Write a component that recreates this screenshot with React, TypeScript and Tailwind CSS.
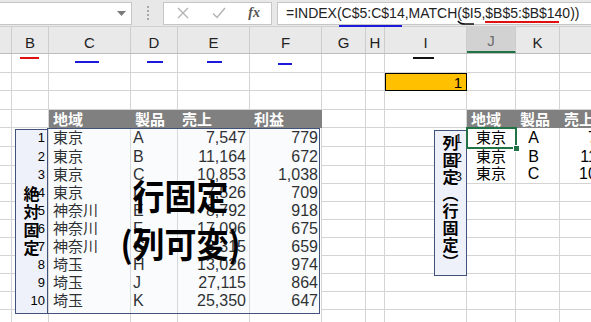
import React from 'react';

type Col = { k: string; w: string };
const COLS: Col[] = [
  { k: 'A', w: 'w-[12px]' },
  { k: 'B', w: 'w-[37px]' },
  { k: 'C', w: 'w-[82px]' },
  { k: 'D', w: 'w-[47px]' },
  { k: 'E', w: 'w-[72px]' },
  { k: 'F', w: 'w-[72px]' },
  { k: 'G', w: 'w-[44px]' },
  { k: 'H', w: 'w-[19px]' },
  { k: 'I', w: 'w-[82px]' },
  { k: 'J', w: 'w-[49px]' },
  { k: 'K', w: 'w-[44px]' },
  { k: 'L', w: 'w-[72px]' },
];

const ROWH = [
  'h-[19px]', 'h-[18px]', 'h-[19px]', 'h-[18px]', 'h-[19px]', 'h-[19px]', 'h-[18px]', 'h-[18px]',
  'h-[18px]', 'h-[18px]', 'h-[18px]', 'h-[18px]', 'h-[18px]', 'h-[18px]', 'h-[18px]',
];

const DATA = [
  ['東京', 'A', '7,547', '779'],
  ['東京', 'B', '11,164', '672'],
  ['東京', 'C', '10,853', '1,038'],
  ['東京', 'D', '7,526', '709'],
  ['神奈川', 'E', '8,792', '918'],
  ['神奈川', 'F', '17,096', '675'],
  ['神奈川', 'G', '8,315', '659'],
  ['埼玉', 'H', '13,026', '974'],
  ['埼玉', 'J', '27,115', '864'],
  ['埼玉', 'K', '25,350', '647'],
];

const HEAD = ['地域', '製品', '売上', '利益'];
const LEFT_KEYS = ['C', 'D', 'E', 'F'];
const RIGHT_KEYS = ['J', 'K', 'L'];

const GRID = 'border-r border-b border-[#d4d4d4]';

function Cell({ r, c }: { r: number; c: Col }) {
  const base = `${c.w} shrink-0 flex overflow-hidden whitespace-nowrap`;
  if (r === 2 && c.k === 'I') {
    return (
      <div className={`${base} bg-[#ffc000] border-[1.5px] border-black items-center justify-end pr-[4px] text-[15px] leading-none`}>
        1
      </div>
    );
  }
  const li = LEFT_KEYS.indexOf(c.k);
  const ri = RIGHT_KEYS.indexOf(c.k);
  if (r === 4 && li >= 0) {
    return (
      <div className={`${base} bg-[#808080] items-center pl-[4px] text-white font-bold text-[15px] leading-none`}>
        {HEAD[li]}
      </div>
    );
  }
  if (r === 4 && ri >= 0) {
    return (
      <div className={`${base} bg-[#808080] items-center pl-[4px] text-white font-bold text-[15px] leading-none`}>
        {HEAD[ri]}
      </div>
    );
  }
  if (r >= 5 && r <= 14 && li >= 0) {
    const v = DATA[r - 5][li];
    if (li === 0)
      return <div className={`${base} border-r border-[#d4d4d4] items-end pb-[1px] pl-[4px] text-[15px] leading-[17px]`}>{v}</div>;
    if (li === 1)
      return <div className={`${base} border-r border-[#d4d4d4] items-end pb-[1px] pl-[2px] text-[16px] leading-[17px]`}>{v}</div>;
    return (
      <div className={`${base} border-r border-[#d4d4d4] items-end justify-end pb-[1px] pr-[3px] text-[16px] leading-[17px]`}>{v}</div>
    );
  }
  if (r >= 5 && r <= 14 && c.k === 'B') {
    return (
      <div className={`${base} ${GRID} items-end justify-end pr-[3px] pb-[2px] text-[13px] leading-none`}>
        <span className="relative z-20">{r - 4}</span>
      </div>
    );
  }
  if (r >= 5 && r <= 7 && c.k === 'I') {
    return (
      <div className={`${base} ${GRID} items-start justify-end pr-[4px] pt-[5px] text-[12px] leading-none`}>
        <span className="relative z-20">{r - 4}</span>
      </div>
    );
  }
  if (r >= 5 && r <= 7 && ri >= 0) {
    const v = DATA[r - 5][ri];
    const b = r === 7 ? GRID : 'border-r border-[#d4d4d4]';
    if (ri === 0)
      return <div className={`${base} ${b} items-end justify-center pb-[1px] text-[15px] leading-[17px]`}>{v}</div>;
    if (ri === 1)
      return <div className={`${base} ${b} items-end justify-center pb-[1px] pr-[8px] text-[16px] leading-[17px]`}>{v}</div>;
    return <div className={`${base} ${b} items-end justify-end pb-[1px] pr-[3px] text-[16px] leading-[17px]`}>{v}</div>;
  }
  return <div className={`${base} ${GRID}`} />;
}

export default function App() {
  return (
    <div className="relative w-[591px] h-[322px] overflow-hidden bg-white text-black font-['Liberation_Sans','Noto_Sans_CJK_JP',sans-serif]">
      {/* formula bar */}
      <div className="h-[27px] bg-[#e8e8e8] flex items-center border-b border-[#d0d0d0]">
        <div className="w-[132px] shrink-0 h-[23px] bg-white border border-l-0 border-[#c6c6c6] flex items-center justify-end pr-[5px]">
          <svg width="9" height="5" viewBox="0 0 9 5">
            <path d="M0 0 L9 0 L4.5 5 Z" fill="#7a7a7a" />
          </svg>
        </div>
        <div className="w-[31px] shrink-0 flex flex-col items-center gap-[2px]">
          <div className="w-[2px] h-[2px] bg-[#a8a8a8]" />
          <div className="w-[2px] h-[2px] bg-[#a8a8a8]" />
          <div className="w-[2px] h-[2px] bg-[#a8a8a8]" />
          <div className="w-[2px] h-[2px] bg-[#a8a8a8]" />
        </div>
        <div className="w-[109px] shrink-0 h-[23px] bg-white border border-[#c6c6c6] flex items-center">
          <div className="w-[38px] flex justify-center">
            <svg width="12" height="12" viewBox="0 0 12 12">
              <path d="M1 1 L11 11 M11 1 L1 11" stroke="#b4b4b4" strokeWidth="1.4" />
            </svg>
          </div>
          <div className="w-[36px] flex justify-center">
            <svg width="14" height="12" viewBox="0 0 14 12">
              <path d="M1 6.5 L5 10.5 L13 1" stroke="#b4b4b4" strokeWidth="1.5" fill="none" />
            </svg>
          </div>
          <div className="w-[34px] flex justify-center font-['Liberation_Serif',serif] italic font-bold text-[14px] text-[#555] leading-none">
            fx
          </div>
        </div>
        <div className="w-[5px] shrink-0" />
        <div className="flex-1 h-[23px] bg-white border border-r-0 border-[#c6c6c6] flex items-center pl-[8px] text-[14px] text-[#222] whitespace-nowrap overflow-hidden">
          =INDEX(C$5:C$14,MATCH($I5,$B$5:$B$140))
        </div>
      </div>

      {/* column headers */}
      <div className="flex h-[27px] bg-[#e9e9e9] border-b border-[#bcbcbc]">
        {COLS.map((c) => (
          <div
            key={c.k}
            className={`${c.w} shrink-0 border-r border-[#cdcdcd] flex items-end justify-center pb-[3px] text-[15px] leading-none ${
              c.k === 'J' ? 'bg-[#d2d2d2] border-b-2 border-b-[#217346] text-[#6b6b6b]' : 'text-[#222]'
            }`}
          >
            {c.k === 'A' ? '' : c.k}
          </div>
        ))}
      </div>

      {/* rows */}
      <div className="flex flex-col">
        {ROWH.map((h, i) => (
          <div key={i} className={`flex ${h}`}>
            {COLS.map((c) => (
              <Cell key={c.k} r={i + 1} c={c} />
            ))}
          </div>
        ))}
      </div>

      {/* formula underline annotations */}
      <div className="absolute left-[339px] top-[25px] w-[63px] h-[2px] bg-[#1a1ad8] z-30" />
      <svg className="absolute left-[457px] top-[20px] z-30" width="18" height="6" viewBox="0 0 18 6">
        <path d="M1 1 Q3 4 8 4 L17 4" stroke="#111" strokeWidth="1.6" fill="none" />
      </svg>
      <div className="absolute left-[485px] top-[21px] w-[74px] h-[2px] bg-[#e01010] z-30" />

      {/* column header annotations */}
      <div className="absolute left-[20px] top-[57px] w-[19px] h-[2px] bg-[#e01010]" />
      <div className="absolute left-[75px] top-[61px] w-[24px] h-[2px] bg-[#1a1ad8]" />
      <div className="absolute left-[147px] top-[61px] w-[16px] h-[2px] bg-[#1a1ad8]" />
      <div className="absolute left-[207px] top-[61px] w-[15px] h-[2px] bg-[#1a1ad8]" />
      <div className="absolute left-[278px] top-[63px] w-[14px] h-[2px] bg-[#1a1ad8]" />
      <div className="absolute left-[413px] top-[57px] w-[21px] h-[2px] bg-[#111]" />

      {/* left vertical box */}
      <div className="absolute left-[15px] top-[129px] w-[33px] h-[185px] border-[1.5px] border-[#41537a] bg-[#eef1f9] z-10 flex items-center justify-center">
        <span className="[writing-mode:vertical-rl] font-['Noto_Sans_CJK_JP',sans-serif] font-bold text-[16px] leading-none tracking-[2px] text-black">
          絶対固定
        </span>
      </div>

      {/* big box */}
      <div className="absolute left-[47px] top-[128px] w-[273px] h-[186px] border-[1.5px] border-[#41537a] bg-[#e3e9f5]/20 z-10 flex flex-col items-center justify-center pr-[6px] pb-[4px] font-['Noto_Sans_CJK_JP',sans-serif] font-bold text-[32px] leading-[48px] text-black">
        <div className="scale-y-[1.1]">行固定</div>
        <div className="scale-y-[1.1]">(列可変)</div>
      </div>

      {/* right vertical box */}
      <div className="absolute left-[434px] top-[130px] w-[33px] h-[146px] border-[1.5px] border-[#41537a] bg-[#eef1f9] z-10 flex items-center justify-center">
        <span className="[writing-mode:vertical-rl] font-['Noto_Sans_CJK_JP',sans-serif] font-bold text-[16px] leading-none tracking-[1px] text-black">
          列固定（行固定）
        </span>
      </div>

      {/* active cell */}
      <div className="absolute left-[466px] top-[127px] w-[51px] h-[22px] border-2 border-[#217346] z-20" />
      <div className="absolute left-[513px] top-[145px] w-[7px] h-[7px] bg-[#217346] border border-white z-20" />
    </div>
  );
}
